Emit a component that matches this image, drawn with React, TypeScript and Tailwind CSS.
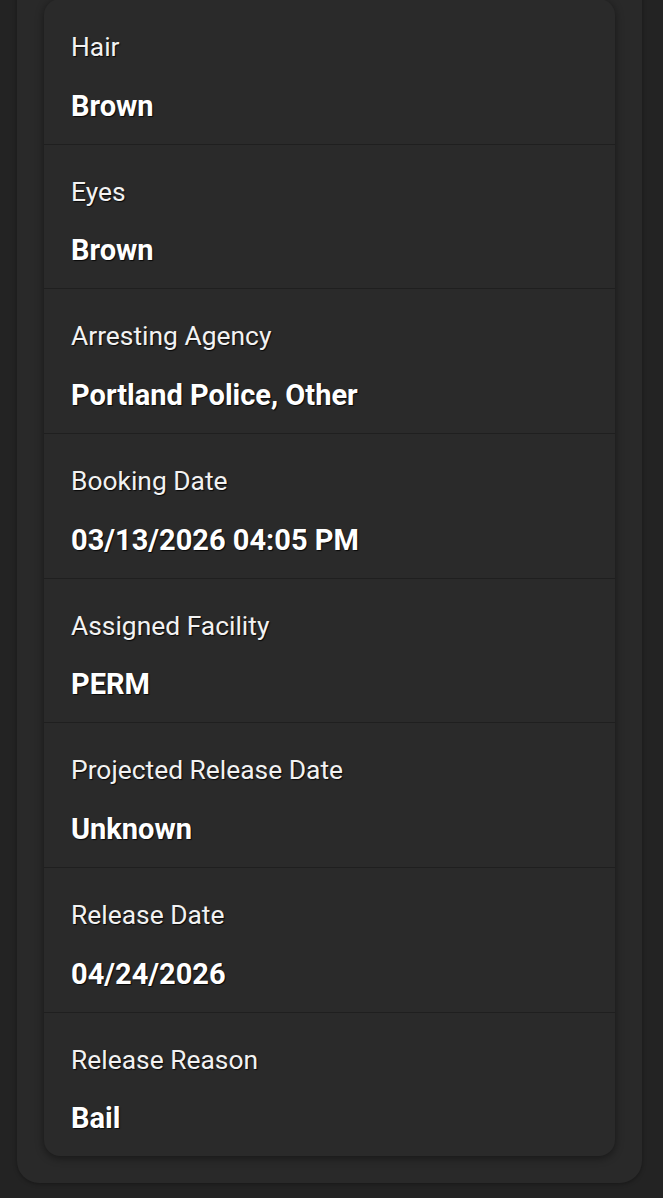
const details = [
  { label: "Hair", value: "Brown" },
  { label: "Eyes", value: "Brown" },
  { label: "Arresting Agency", value: "Portland Police, Other" },
  { label: "Booking Date", value: "03/13/2026 04:05 PM" },
  { label: "Assigned Facility", value: "PERM" },
  { label: "Projected Release Date", value: "Unknown" },
  { label: "Release Date", value: "04/24/2026" },
  { label: "Release Reason", value: "Bail" },
];

export default function App() {
  return (
    <div className="min-h-screen bg-[#232323] pl-[17px] pr-[21px] pb-[15px] font-['Roboto',sans-serif] text-white">
      {/* outer panel (page is scrolled, top is cut off) */}
      <div className="-mt-[40px] rounded-[22px] bg-[#292929] px-[27px] pt-[39px] pb-[27px] shadow-[0_1px_4px_rgba(0,0,0,0.35)]">
        <div className="overflow-hidden rounded-[16px] bg-[#2a2a2a] shadow-[0_2px_8px_rgba(0,0,0,0.45)]">
          {details.map((item) => (
            <div
              key={item.label}
              className="flex flex-col border-t border-[#1f1f1f] px-[27px] pt-[29px] pb-[18px] [text-shadow:1px_1px_1px_rgba(0,0,0,0.8)]"
            >
              <span className="text-[26.4px] leading-[36px] text-[#f2f2f2]">{item.label}</span>
              <span className="mt-[20.67px] text-[29px] font-bold leading-[40px]">{item.value}</span>
            </div>
          ))}
        </div>
      </div>
    </div>
  );
}
